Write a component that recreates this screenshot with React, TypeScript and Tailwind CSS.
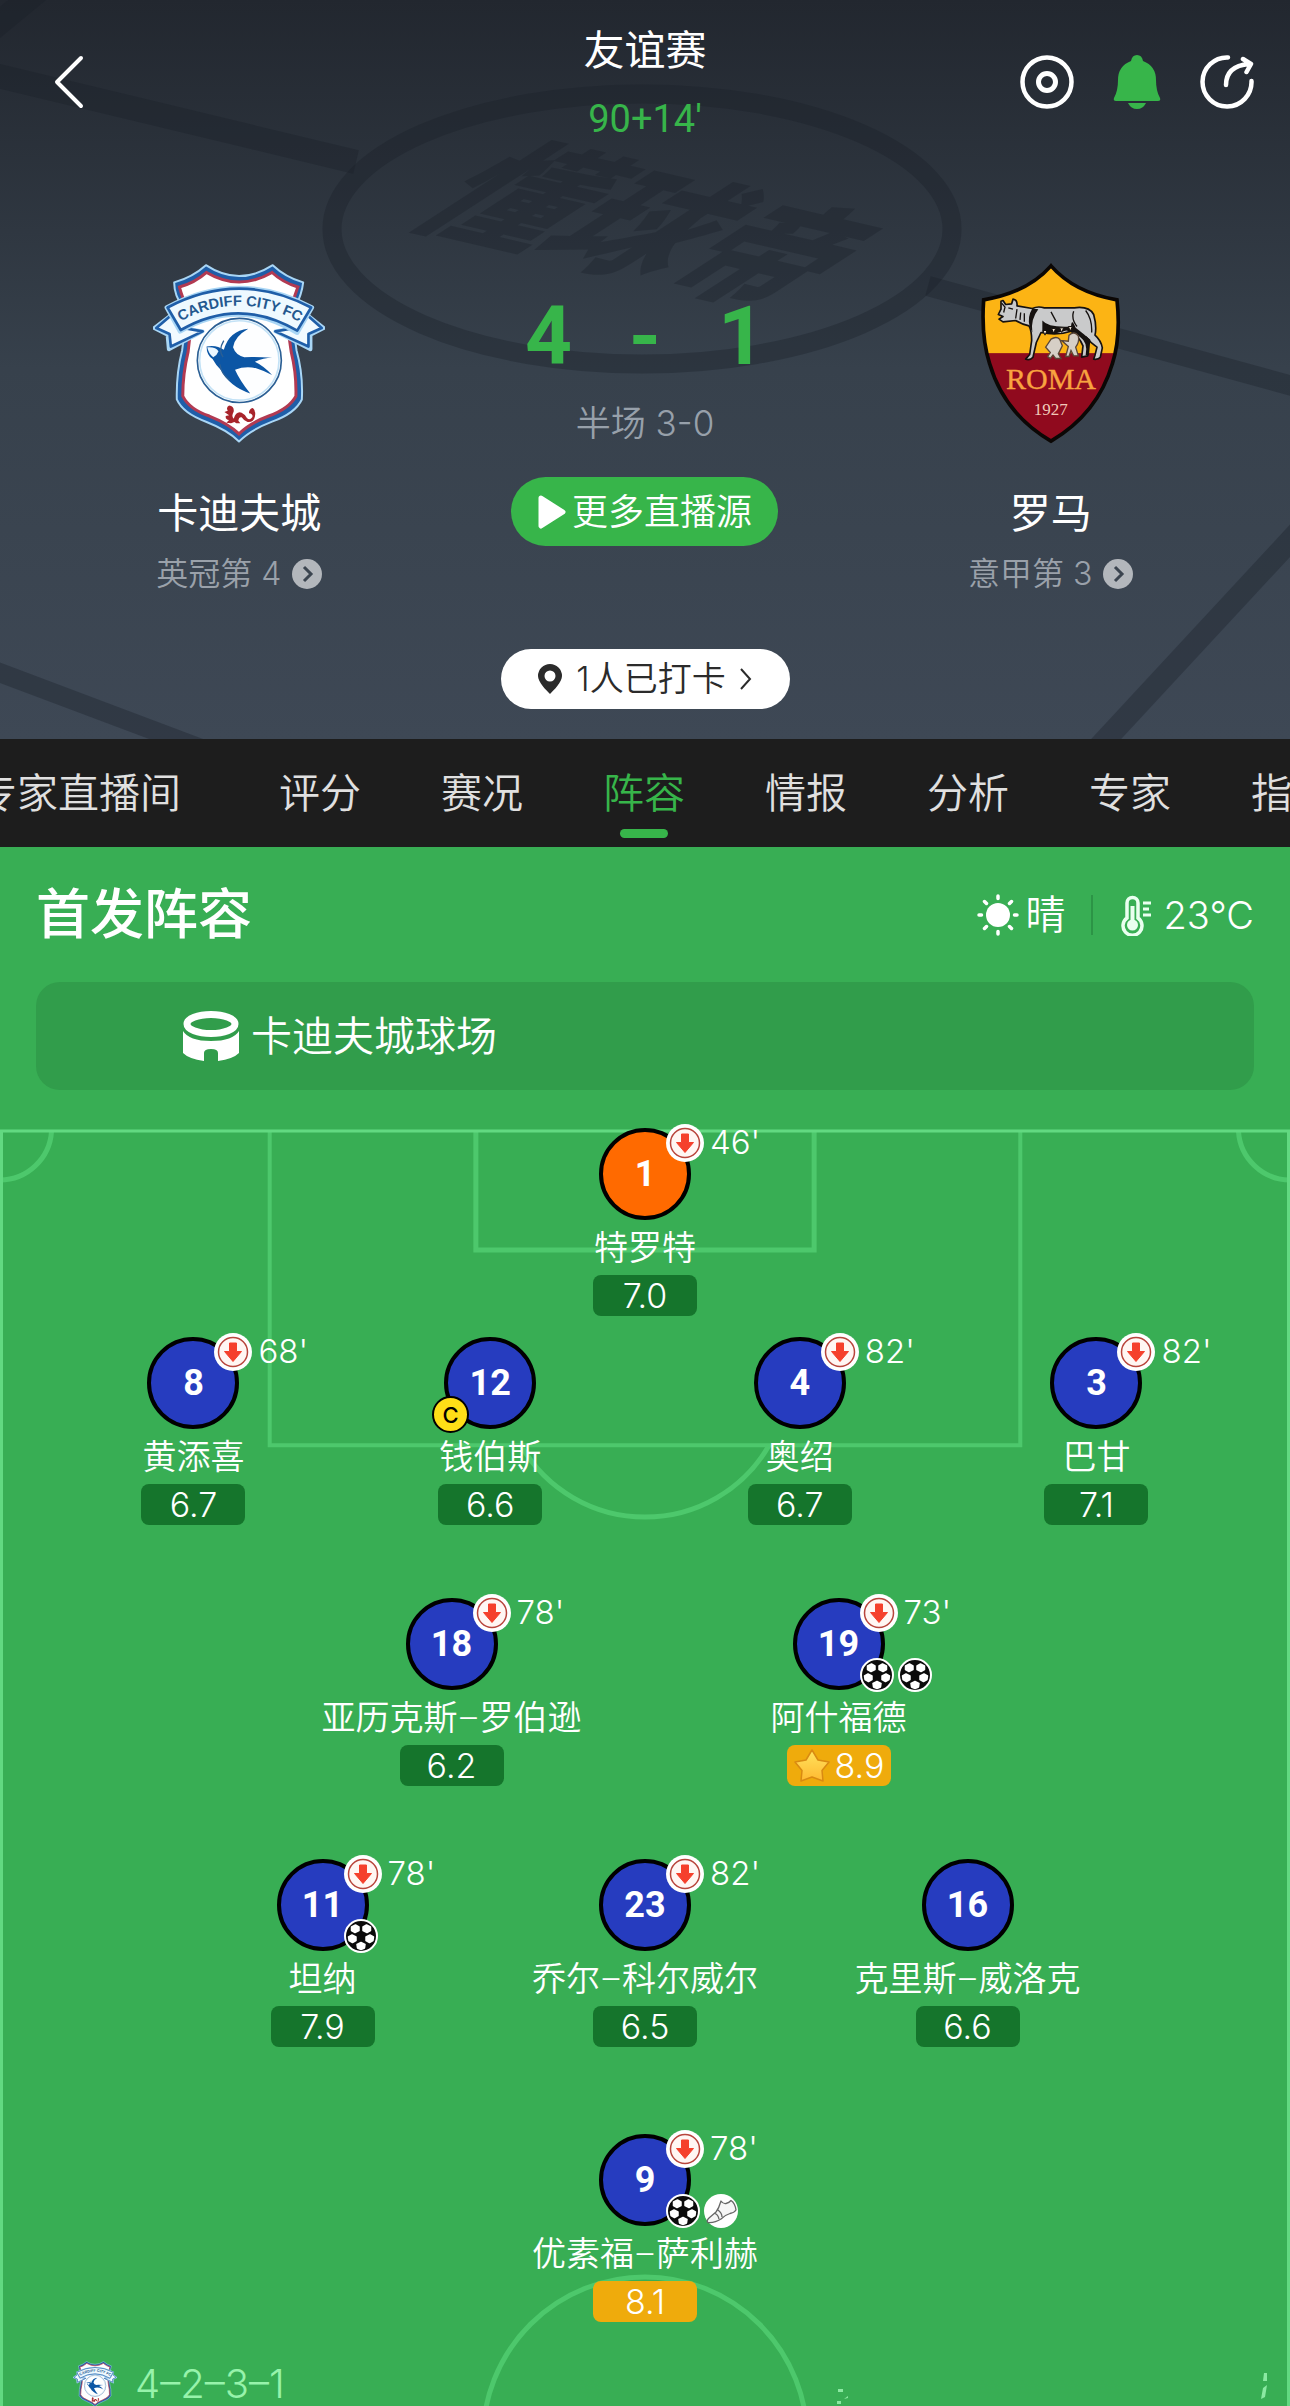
import { clsx } from "clsx";

type EventKind = "goal" | "assist";

interface Player {
  number: number;
  name: string;
  rating: string;
  off?: string;
  events?: EventKind[];
  captain?: boolean;
  keeper?: boolean;
  best?: boolean;
}

interface Line {
  grid: string;
  players: Player[];
}

const TABS = ["专家直播间", "评分", "赛况", "阵容", "情报", "分析", "专家", "指数"];
const ACTIVE_TAB = "阵容";

const LINES: Line[] = [
  {
    grid: "grid-cols-1",
    players: [{ number: 1, name: "特罗特", rating: "7.0", off: "46'", keeper: true }],
  },
  {
    grid: "mt-[21px] w-[92%] grid-cols-[22fr_24fr_24fr_22fr]",
    players: [
      { number: 8, name: "黄添喜", rating: "6.7", off: "68'" },
      { number: 12, name: "钱伯斯", rating: "6.6", captain: true },
      { number: 4, name: "奥绍", rating: "6.7", off: "82'" },
      { number: 3, name: "巴甘", rating: "7.1", off: "82'" },
    ],
  },
  {
    grid: "mt-[73px] w-3/5 grid-cols-2",
    players: [
      { number: 18, name: "亚历克斯–罗伯逊", rating: "6.2", off: "78'" },
      { number: 19, name: "阿什福德", rating: "8.9", off: "73'", events: ["goal", "goal"], best: true },
    ],
  },
  {
    grid: "mt-[73px] w-3/4 grid-cols-3",
    players: [
      { number: 11, name: "坦纳", rating: "7.9", off: "78'", events: ["goal"] },
      { number: 23, name: "乔尔–科尔威尔", rating: "6.5", off: "82'" },
      { number: 16, name: "克里斯–威洛克", rating: "6.6" },
    ],
  },
  {
    grid: "mt-[87px] grid-cols-1",
    players: [{ number: 9, name: "优素福–萨利赫", rating: "8.1", off: "78'", events: ["goal", "assist"] }],
  },
];

function CardiffCrest({ className }: { className?: string }) {
  return (
    <svg viewBox="70 66 520 546" className={className} aria-hidden="true">
      <path
        d="M230 72 Q330 138 432 72 Q470 108 524 124 Q520 160 500 200 Q492 260 504 330 Q524 400 520 478 Q500 520 430 545 Q365 570 330 605 Q298 572 232 546 Q160 520 142 478 Q140 400 158 330 Q170 260 162 200 Q134 165 134 124 Q190 108 230 72Z"
        fill="#1f5ea8"
        stroke="#a9d6f5"
        strokeWidth="6"
        strokeLinejoin="round"
      />
      <path
        d="M232 94 Q330 152 430 94 Q462 124 508 138 Q496 170 484 210 Q476 270 488 335 Q504 400 502 468 Q482 505 420 528 Q362 550 330 582 Q300 552 240 528 Q180 508 160 468 Q160 400 176 335 Q186 270 178 210 Q158 170 150 138 Q196 126 232 94Z"
        fill="#fff"
        stroke="#b23a52"
        strokeWidth="9"
      />
      <path
        d="M134 216 L74 262 L114 282 L118 326 L220 272 L160 262Z M528 216 L586 262 L546 282 L546 326 L440 272 L500 262Z"
        fill="#f1faff"
        stroke="#a9d6f5"
        strokeWidth="12"
        strokeLinejoin="round"
      />
      <path
        d="M134 216 L80 262 L120 280 L124 318 L220 272 L160 262Z M528 216 L580 262 L540 280 L540 318 L440 272 L500 262Z"
        fill="#f1faff"
        stroke="#1f5ea8"
        strokeWidth="8"
        strokeLinejoin="round"
      />
      <path
        d="M112 200 Q330 82 550 200 L506 276 Q330 168 152 272Z"
        fill="#eef9ff"
        stroke="#a9d6f5"
        strokeWidth="14"
        strokeLinejoin="round"
      />
      <path
        d="M114 200 Q330 86 548 200 L506 270 Q330 166 154 268Z"
        fill="#eef9ff"
        stroke="#1f5ea8"
        strokeWidth="8"
        strokeLinejoin="round"
      />
      <path id="crest-arc" d="M160 238 Q330 150 506 240" fill="none" />
      <text fill="#24588f" fontSize="44" fontWeight="700" fontFamily="Liberation Sans, Arial, sans-serif" textAnchor="middle">
        <textPath href="#crest-arc" startOffset="50%">
          CARDIFF CITY FC
        </textPath>
      </text>
      <circle cx="331" cy="360" r="127" fill="#fdfeff" stroke="#2b5f94" strokeWidth="5" />
      <circle cx="331" cy="360" r="120" fill="none" stroke="#c3e2f6" strokeWidth="5" />
      <path
        d="M358 264 Q300 270 284 328 Q262 312 232 318 Q232 344 250 356 Q262 378 276 390 Q302 440 364 460 Q332 420 318 388 Q350 376 384 384 Q410 392 430 404 Q404 376 378 364 Q404 352 430 352 Q376 348 346 350 Q320 344 312 320 Q316 288 358 264Z"
        fill="#0c56a5"
      />
      <path d="M234 320 Q260 318 268 332 Q264 344 252 350 Q238 340 234 320Z" fill="#eaf6ff" />
      <path d="M284 300 Q266 330 282 350 M272 372 Q276 400 302 420" fill="none" stroke="#2b5f94" strokeWidth="4" />
      <path
        d="M286 516 L296 512 Q290 502 300 496 Q316 498 314 514 Q306 530 314 536 Q322 512 338 518 Q350 524 354 534 Q362 542 370 532 Q374 522 360 520 Q360 506 372 504 Q382 512 378 530 Q374 548 356 546 Q346 544 338 532 Q330 530 328 542 L334 550 H322 L316 546 L306 550 L292 548 L300 540 Q288 538 290 528 L300 526Z"
        fill="#a8242b"
      />
    </svg>
  );
}

function RomaCrest({ className }: { className?: string }) {
  return (
    <svg viewBox="60 68 420 542" className={className} aria-hidden="true">
      <defs>
        <clipPath id="roma-shield">
          <path d="M270 76 Q340 156 468 178 Q480 290 454 370 Q410 520 270 602 Q130 520 86 370 Q60 290 68 178 Q200 156 270 76Z" />
        </clipPath>
      </defs>
      <g clipPath="url(#roma-shield)">
        <rect x="60" y="68" width="420" height="272" fill="#fcb414" />
        <rect x="60" y="338" width="420" height="272" fill="#900a1e" />
      </g>
      <path
        d="M270 76 Q340 156 468 178 Q480 290 454 370 Q410 520 270 602 Q130 520 86 370 Q60 290 68 178 Q200 156 270 76Z"
        fill="none"
        stroke="#0b0705"
        strokeWidth="11"
      />
      <path
        d="M120 182 L126 180 L134 192 L152 190 L156 176 Q170 178 168 196 L214 204 Q230 196 250 202 L340 202 Q384 196 398 222 Q408 258 402 284 Q420 300 424 322 L418 350 Q412 358 398 356 L402 344 L408 320 Q388 306 376 290 Q384 320 380 346 L362 350 L366 316 Q352 284 330 272 Q290 286 240 276 L226 306 L216 350 Q208 360 194 356 L206 342 L212 300 Q212 270 204 256 Q180 250 164 240 L126 244 L114 236 L126 228 L112 222 L120 206Z"
        fill="#c9cacb"
        stroke="#15110f"
        strokeWidth="5"
        strokeLinejoin="round"
      />
      <path
        d="M214 204 Q198 230 206 258 L214 276 Q208 236 232 206Z M244 240 Q262 262 330 258 Q332 230 344 262 Q370 282 388 298 L384 344 L374 344 Q382 306 358 290 Q340 274 316 270 Q276 284 244 276Z"
        fill="#15110f"
      />
      <path
        d="M122 188 L132 200 L128 216 M142 202 L156 206 M168 206 L164 234 M179 216 L177 238 M190 218 L190 244 M270 214 L286 244 M338 212 Q330 236 348 258 M374 210 Q394 236 392 276"
        fill="none"
        stroke="#15110f"
        strokeWidth="4"
      />
      <path
        d="M270 296 Q286 286 296 296 L304 316 L292 340 L300 354 H284 L276 344 L268 354 L260 348 L268 336 L254 320Z M324 284 Q340 270 352 286 Q356 304 344 320 L352 346 H338 L330 330 L324 348 H314 L322 318 L302 300 L322 302Z"
        fill="#d6cfc6"
        stroke="#5a4636"
        strokeWidth="4"
      />
      <path d="M246 270 h12 l-6 14z M272 264 h12 l-6 14z M296 262 h12 l-6 14z M322 258 h12 l-6 14z" fill="#f3e6d2" stroke="#15110f" strokeWidth="3" />
      <text x="270" y="446" textAnchor="middle" fontSize="90" fill="#f8a340" stroke="#f8a340" strokeWidth="1" fontFamily="Liberation Serif, serif">
        ROMA
      </text>
      <text x="269" y="522" textAnchor="middle" fontSize="51" fill="#f0c9b8" fontFamily="Liberation Serif, serif">
        1927
      </text>
    </svg>
  );
}

function HeaderBackdrop() {
  return (
    <svg
      viewBox="0 0 1290 739"
      preserveAspectRatio="xMidYMid slice"
      className="absolute inset-0 h-full w-full"
      aria-hidden="true"
    >
      <g fill="none" stroke="#1a2029" strokeOpacity="0.35" strokeWidth="19">
        <ellipse cx="642" cy="229" rx="310" ry="135" />
        <path d="M-10 74 L356 162" strokeWidth="24" />
        <path d="M928 286 L1300 388" strokeWidth="20" />
        <path d="M44 -14 L-14 34" strokeWidth="24" />
        <path d="M-10 669 L200 748" />
        <path d="M1300 530 L1096 750" strokeWidth="22" />
      </g>
      <text
        transform="translate(404 219) rotate(13) skewX(-44)"
        fontSize="129"
        fontWeight="800"
        fill="#1a2029"
        fillOpacity="0.35"
        fontFamily="Noto Sans CJK SC, sans-serif"
      >
        懂球帝
      </text>
    </svg>
  );
}

function PitchLines() {
  return (
    <svg
      viewBox="0 0 1290 1277"
      preserveAspectRatio="xMidYMin slice"
      className="absolute inset-0 h-full w-full"
      aria-hidden="true"
    >
      <g fill="none" stroke="#4dc86c" strokeWidth="5">
        <path d="M270 2 V316 H1020 V2" strokeWidth="4" />
        <path d="M476 2 V121 H814 V2" />
        <path d="M521 316 A143 143 0 0 0 769 316" />
        <path d="M0 51 A52 52 0 0 0 52 2 M1290 51 A52 52 0 0 1 1238 2" />
        <circle cx="645" cy="1309" r="162" />
      </g>
      <path d="M2 1277 V2 H1288 V1277" fill="none" stroke="#62d981" strokeWidth="3" />
    </svg>
  );
}

function Football() {
  return (
    <svg viewBox="0 0 34 34" className="h-[34px] w-[34px]" aria-hidden="true">
      <circle cx="17" cy="17" r="16" fill="#0b0b0b" stroke="#fff" strokeWidth="2" />
      <g fill="#fff" stroke="#fff" strokeWidth="1.500" strokeLinejoin="round">
        <path d="M7.500 8 L11.500 6 L15 8 L15 11.500 L11 13.500 L7.500 11.500Z" />
        <path d="M26.500 8 L22.500 6 L19 8 L19 11.500 L23 13.500 L26.500 11.500Z" />
        <path d="M4.500 18 L8 16 L12 18 L12 21.500 L8.500 23.500 L5 21.500Z" />
        <path d="M29.500 18 L26 16 L22 18 L22 21.500 L25.500 23.500 L29 21.500Z" />
        <path d="M17 23.500 L21 25.500 L20.500 29 L17 30.500 L13.500 29 L13 25.500Z" />
      </g>
    </svg>
  );
}

function Boot() {
  return (
    <svg viewBox="0 0 34 34" className="h-[34px] w-[34px]" aria-hidden="true">
      <circle cx="17" cy="17" r="17" fill="#fff" />
      <path
        d="M17 7 Q19 10 22 9.500 Q25 9 27 6.500 Q31 9 32 16 Q30 19 26 19.500 Q21 21 17 25 Q11 29 4 28.500 Q2 27 5 24 L12 18 Q15 14 17 7Z M11 19.500 Q14 20.500 15 25 M14 16 Q18 19 18 23"
        fill="#f6f6f6"
        stroke="#666"
        strokeWidth="1.300"
        strokeLinejoin="round"
      />
    </svg>
  );
}

function SubOff() {
  return (
    <svg viewBox="0 0 38 38" className="h-[38px] w-[38px]" aria-hidden="true">
      <circle cx="19" cy="19" r="19" fill="#fff" />
      <circle cx="19" cy="19" r="14.500" fill="#fff6f3" stroke="#b8453c" strokeWidth="1.500" />
      <path
        d="M15.500 10 H22.500 V18.500 H27.500 L19 28.500 L10.500 18.500 H15.500Z"
        fill="#f5402c"
        stroke="#f5402c"
        strokeWidth="1"
        strokeLinejoin="round"
      />
    </svg>
  );
}

function Star() {
  return (
    <svg viewBox="0 0 38 36" className="h-9 w-[38px]" aria-hidden="true">
      <defs>
        <linearGradient id="star" x1="0" y1="0" x2="0" y2="1">
          <stop offset="0" stopColor="#ffe45e" />
          <stop offset="1" stopColor="#ffb931" />
        </linearGradient>
      </defs>
      <path
        d="M19 2 L25 12 L36 14 L29 22.500 L30 33 L19 29 L8 33 L9 22.500 L2 14 L13 12Z"
        fill="url(#star)"
        stroke="#d98a12"
        strokeWidth="1.500"
        strokeLinejoin="round"
      />
    </svg>
  );
}

function PlayerCard({ player }: { player: Player }) {
  const highRating = Number(player.rating) >= 8;

  return (
    <li className="flex flex-col items-center">
      <div
        className={clsx(
          "relative flex h-[92px] w-[92px] items-center justify-center rounded-full border-4 border-black",
          player.keeper ? "bg-[#ff6a00]" : "bg-[#263cbf]"
        )}
      >
        <span className="font-[Roboto] text-[36px] leading-10 font-bold">{player.number}</span>
        {player.off && (
          <div className="absolute -top-2 left-[63px] flex gap-1.5">
            <SubOff />
            <span className="text-[33px] leading-9 font-[350]">{player.off}</span>
          </div>
        )}
        {player.captain && (
          <span className="absolute top-[55px] -left-4 flex h-[37px] w-[37px] items-center justify-center rounded-full border-2 border-black bg-[#ffde17] text-[22px] leading-6 font-medium text-black">
            C
          </span>
        )}
        {player.events && (
          <div className="absolute top-14 left-[63px] flex gap-1">
            {player.events.map((event, index) => (event === "goal" ? <Football key={index} /> : <Boot key={index} />))}
          </div>
        )}
      </div>
      <p className="mt-1.5 font-[Roboto,'Noto_Sans_CJK_SC',sans-serif] text-[34px] leading-[44px] font-[350] whitespace-nowrap">
        {player.name}
      </p>
      <div
        className={clsx(
          "mt-[5px] flex h-[41px] w-[104px] items-center justify-center gap-1 rounded-lg text-[34px] leading-10 font-[350]",
          highRating ? "bg-[#efab0c]" : "bg-[#15752c]"
        )}
      >
        {player.best && <Star />}
        {player.rating}
      </div>
    </li>
  );
}

interface TeamProps {
  name: string;
  rank: string;
  crest: React.ReactNode;
}

function Team({ name, rank, crest }: TeamProps) {
  return (
    <div className="flex flex-col items-center">
      {crest}
      <h2 className="mt-[41px] text-[41px] leading-[56px]">{name}</h2>
      <a href="#rank" className="mt-[13px] flex items-center gap-[11px] text-[32px] leading-10 font-[350] text-[#9aa1aa]">
        {rank}
        <svg viewBox="0 0 30 30" className="h-[30px] w-[30px]" aria-hidden="true">
          <circle cx="15" cy="15" r="15" fill="#b3b7bc" />
          <path d="M12 8 L19 15 L12 22" fill="none" stroke="#3b4550" strokeWidth="3" />
        </svg>
      </a>
    </div>
  );
}

function MatchHeader() {
  return (
    <header className="relative bg-linear-to-b from-[#22272f] via-[#37414c] via-50% to-[#3e4855] pb-[30px]">
      <HeaderBackdrop />
      <div className="relative">
        <div className="grid grid-cols-3 items-center px-9 pt-[22px]">
          <button aria-label="返回" className="w-12 pl-4">
            <svg viewBox="0 0 32 54" className="h-[54px] w-8" fill="none" stroke="#fff" strokeWidth="4" aria-hidden="true">
              <path d="M29 3 L5 27 L29 51" strokeLinecap="round" strokeLinejoin="round" />
            </svg>
          </button>
          <div className="text-center">
            <h1 className="text-[41px] leading-[56px]">友谊赛</h1>
            <p className="mt-[19px] font-[Roboto] text-[38px] leading-[44px] text-[#37b54a]">90+14'</p>
          </div>
          <div className="flex justify-end gap-9">
            <button aria-label="关注">
              <svg viewBox="0 0 54 54" className="h-[54px] w-[54px]" fill="none" stroke="#fff" aria-hidden="true">
                <circle cx="27" cy="27" r="24.500" strokeWidth="4.500" />
                <circle cx="27" cy="27" r="8.500" strokeWidth="5" />
              </svg>
            </button>
            <button aria-label="提醒">
              <svg viewBox="0 0 54 54" className="h-[54px] w-[54px]" fill="#37b54a" aria-hidden="true">
                <path d="M27 0 Q32 0 33 6 Q46 11 46 25 Q46 36 50 43 Q51 46 48 46 H6 Q3 46 4 43 Q8 36 8 25 Q8 11 21 6 Q22 0 27 0Z" />
                <path d="M18 48 H36 Q33 54 27 54 Q21 54 18 48Z" />
              </svg>
            </button>
            <button aria-label="分享">
              <svg
                viewBox="0 0 54 54"
                className="h-[54px] w-[54px]"
                fill="none"
                stroke="#fff"
                strokeWidth="4.500"
                strokeLinecap="round"
                strokeLinejoin="round"
                aria-hidden="true"
              >
                <path d="M28 2.500 A24.500 24.500 0 1 0 51.500 26" />
                <path d="M26 30 Q26 11 49 9 M43 4 L51 9 L46.500 17" />
              </svg>
            </button>
          </div>
        </div>

        <div className="mt-[122px] grid grid-cols-[59fr_41fr_59fr]">
          <Team name="卡迪夫城" rank="英冠第 4" crest={<CardiffCrest className="h-[181px] w-[172px]" />} />
          <div className="flex flex-col items-center">
            <div className="mt-[33px] flex w-60 justify-between font-[Roboto] text-[82px] leading-20 font-bold text-[#37b54a]">
              <span>4</span>
              <span>-</span>
              <span>1</span>
            </div>
            <p className="mt-[27px] text-[35px] leading-10 font-[350] text-[#97a0aa]">半场 3-0</p>
            <button className="mt-[34px] flex h-[69px] w-[267px] items-center justify-center gap-1.5 rounded-full bg-[#37b54a] text-[36px] leading-10 font-[350]">
              <svg viewBox="0 0 28 34" className="h-[34px] w-7" aria-hidden="true">
                <path d="M3 3 L25 17 L3 31Z" fill="#fff" stroke="#fff" strokeWidth="5" strokeLinejoin="round" />
              </svg>
              更多直播源
            </button>
          </div>
          <Team name="罗马" rank="意甲第 3" crest={<RomaCrest className="h-[181px] w-[140px]" />} />
        </div>

        <button className="mx-auto mt-[55px] flex h-[60px] w-[289px] items-center justify-center gap-3.5 rounded-full bg-white text-[34px] leading-10 font-[350] text-[#2b2b2b]">
          <svg viewBox="0 0 24 30" className="h-[30px] w-6" aria-hidden="true">
            <path
              d="M12 0 A12 12 0 0 1 24 12 C24 18 16 26 12 30 C8 26 0 18 0 12 A12 12 0 0 1 12 0Z M12 6.500 A5.500 5.500 0 1 0 12 17.500 A5.500 5.500 0 1 0 12 6.500Z"
              fill="#2b2b2b"
              fillRule="evenodd"
            />
          </svg>
          1人已打卡
          <svg viewBox="0 0 12 22" className="h-[22px] w-3" fill="none" stroke="#2b2b2b" strokeWidth="2" aria-hidden="true">
            <path d="M1 1 L10 11 L1 21" />
          </svg>
        </button>
      </div>
    </header>
  );
}

function TabBar() {
  return (
    <nav className="overflow-hidden bg-[#1d1d1d]">
      <ul className="-ml-6 flex h-27 w-max gap-20">
        {TABS.map((tab) => (
          <li key={tab} className="relative flex items-center first:mr-[18px]">
            <a
              href="#lineup"
              className={clsx(
                "text-[41px] leading-[56px] font-[350] whitespace-nowrap",
                tab === ACTIVE_TAB ? "text-[#37b54a]" : "text-[#e0e0e0]"
              )}
            >
              {tab}
            </a>
            {tab === ACTIVE_TAB && (
              <span className="absolute bottom-[9px] left-1/2 h-[9px] w-12 -translate-x-1/2 rounded-full bg-[#37b54a]" />
            )}
          </li>
        ))}
      </ul>
    </nav>
  );
}

function Weather() {
  return (
    <div className="flex items-center text-[40px] leading-[56px] font-[350]">
      <svg viewBox="0 0 42 42" className="mr-1.5 h-[42px] w-[42px]" aria-hidden="true">
        <circle cx="21" cy="21" r="12" fill="#fff" />
        <path
          d="M21 2 V4.500 M21 37.500 V40 M2 21 H4.500 M37.500 21 H40 M7.500 7.500 L9.500 9.500 M32.500 32.500 L34.500 34.500 M7.500 34.500 L9.500 32.500 M32.500 9.500 L34.500 7.500"
          stroke="#fff"
          strokeWidth="3.500"
          strokeLinecap="round"
        />
      </svg>
      晴
      <span className="mx-[26px] h-10 w-0.5 bg-[#2c9446]" />
      <svg viewBox="0 0 34 42" className="mr-2.5 h-[42px] w-[34px]" aria-hidden="true">
        <path
          d="M8 9 A5.500 5.500 0 0 1 19 9 V24 A9.500 9.500 0 1 1 8 24Z"
          fill="none"
          stroke="#eafff0"
          strokeWidth="3.500"
        />
        <circle cx="13.500" cy="31" r="5.500" fill="#eafff0" />
        <path d="M13.500 12 V31" stroke="#eafff0" strokeWidth="4" />
        <path d="M24 9 H32 M24 15 H30 M24 21 H32" stroke="#eafff0" strokeWidth="3" />
      </svg>
      <span className="text-[38px]">23°C</span>
    </div>
  );
}

function Lineup() {
  return (
    <main id="lineup" className="bg-[#38ae54]">
      <div className="flex h-[135px] items-center justify-between px-9">
        <h2 className="text-[54px] leading-[72px] font-medium">首发阵容</h2>
        <Weather />
      </div>

      <div className="mx-9 flex h-27 items-center gap-3 rounded-3xl bg-[#319d4b] pl-[147px] text-[41px] leading-[56px] font-[350]">
        <svg viewBox="0 0 56 50" className="h-[50px] w-14" aria-hidden="true">
          <path d="M0 20 Q6 30 28 30 Q50 30 56 20 V42 Q50 48 35 50 V42 Q35 38 28 38 Q21 38 21 42 V50 Q6 48 0 42Z" fill="#fff" />
          <ellipse cx="28" cy="13" rx="24" ry="9.500" fill="none" stroke="#fff" strokeWidth="7" />
        </svg>
        卡迪夫城球场
      </div>

      <div className="relative mt-[39px]">
        <PitchLines />
        <div className="relative -top-px">
          {LINES.map((line, index) => (
            <ul key={index} className={clsx("mx-auto grid", line.grid)}>
              {line.players.map((player) => (
                <PlayerCard key={player.number} player={player} />
              ))}
            </ul>
          ))}
        </div>
        <div className="relative flex h-[84px] items-end justify-between pr-5 pl-[73px]">
          <div className="flex items-center gap-[18px] text-[40px] leading-[46px] font-[350] text-[#97f3ab]">
            <CardiffCrest className="h-[46px] w-11" />
            4–2–3–1
          </div>
          <svg viewBox="0 0 440 46" className="h-[46px] w-[440px]" fill="#8be9a2" aria-hidden="true">
            <path d="M8 28 h5 v3 h-5z M7 40 h4 v3 h-4z M14 38 l4 -3 v2z M434 12 h3 v8 h-4z M433 27 l4 -3 -2 12 -4 2z" />
          </svg>
        </div>
      </div>
    </main>
  );
}

export default function App() {
  return (
    <div className="min-h-screen overflow-x-hidden bg-[#38ae54] font-[Inter,'Noto_Sans_CJK_SC',sans-serif] text-white">
      <MatchHeader />
      <TabBar />
      <Lineup />
    </div>
  );
}
